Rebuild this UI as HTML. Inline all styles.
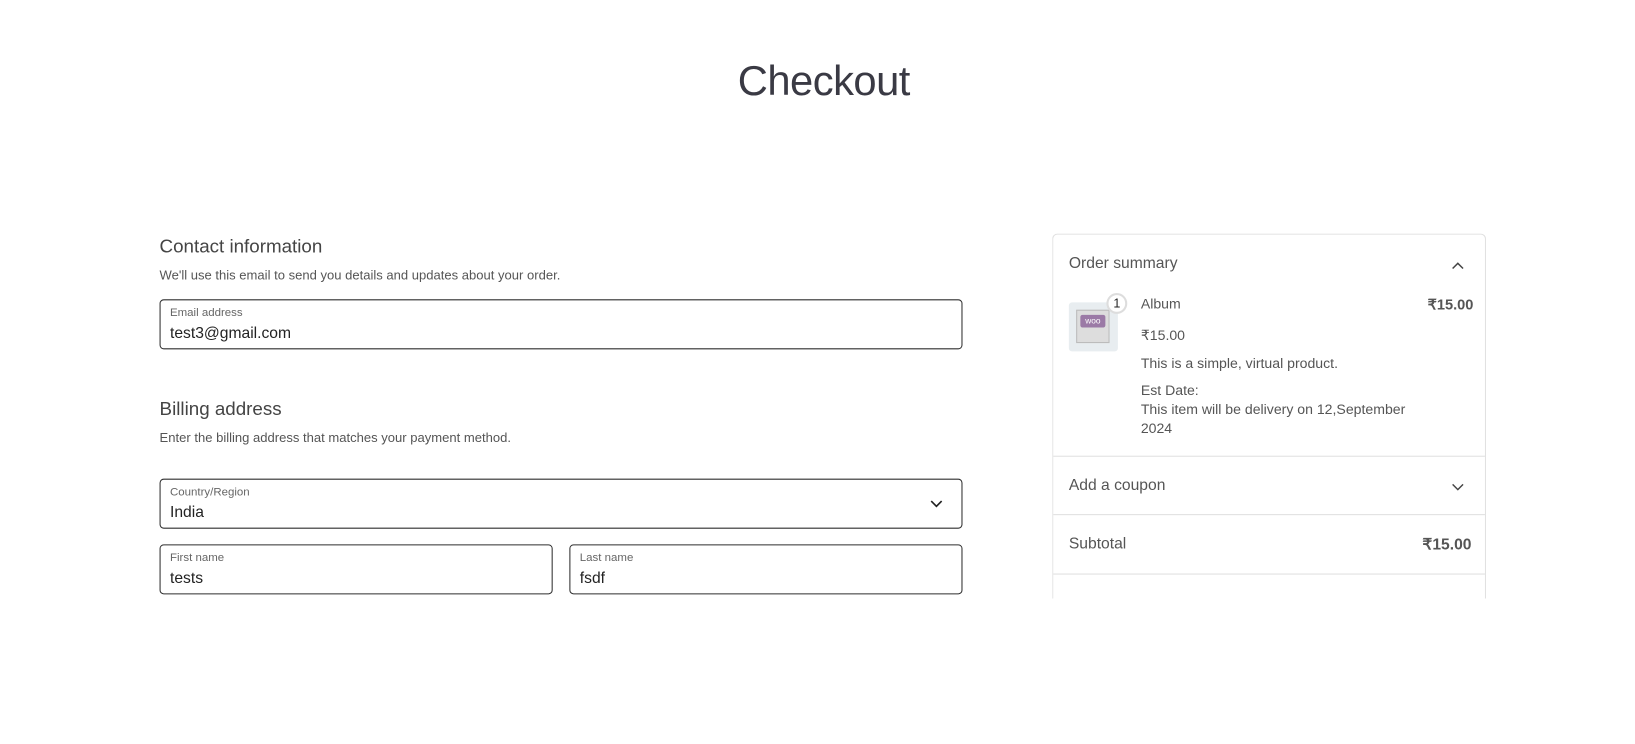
<!DOCTYPE html>
<html><head><meta charset="utf-8"><style>
*{box-sizing:border-box;margin:0;padding:0}
body{width:1635px;height:743px;background:#fff;font-family:"Liberation Sans",sans-serif;color:#2f2f2f;overflow:hidden}
#w{position:relative;width:1568px;height:713px;transform:scale(1.0428);transform-origin:0 0}
.abs{position:absolute;white-space:nowrap}
h1{position:absolute;left:0;width:1580px;text-align:center;top:56px;font-size:40px;font-weight:normal;color:#3a3a44;letter-spacing:-0.5px}
.h2{font-size:18px;color:#444}
.sub{font-size:12.5px;color:#555}
.field{position:absolute;border:1px solid #2f2f2f;border-radius:4px;background:#fff}
.field .lab{position:absolute;left:9px;top:6px;font-size:11px;color:#666}
.field .val{position:absolute;left:9px;top:23px;font-size:15px;color:#222}
.card{position:absolute;left:1009px;top:224px;width:416px;height:350px;border:1px solid #e0e0e0;border-bottom:none;border-radius:5px 5px 0 0}
.line{position:absolute;left:1010px;width:414px;height:1px;background:#e0e0e0}
.t{font-size:13.5px;color:#555}
</style></head><body><div id="w">
<h1>Checkout</h1>
<div class="abs h2" style="left:153px;top:226px">Contact information</div>
<div class="abs sub" style="left:153px;top:257px">We'll use this email to send you details and updates about your order.</div>
<div class="field" style="left:153px;top:287px;width:770px;height:48px"><span class="lab">Email address</span><span class="val">test3@gmail.com</span></div>
<div class="abs h2" style="left:153px;top:382px">Billing address</div>
<div class="abs sub" style="left:153px;top:413px">Enter the billing address that matches your payment method.</div>
<div class="field" style="left:153px;top:459px;width:770px;height:48px"><span class="lab">Country/Region</span><span class="val">India</span>
<svg style="position:absolute;right:18px;top:19px" width="12" height="8" viewBox="0 0 12 8"><path d="M1 1.5l5 5 5-5" fill="none" stroke="#222" stroke-width="1.6"/></svg></div>
<div class="field" style="left:153px;top:522px;width:377px;height:48px"><span class="lab">First name</span><span class="val">tests</span></div>
<div class="field" style="left:546px;top:522px;width:377px;height:48px"><span class="lab">Last name</span><span class="val">fsdf</span></div>

<div class="card"></div>
<div class="abs" style="left:1025px;top:244px;font-size:15px;color:#555">Order summary</div>
<svg class="abs" style="left:1392px;top:251px" width="12" height="8" viewBox="0 0 12 8"><path d="M1 6.5l5-5 5 5" fill="none" stroke="#444" stroke-width="1.4"/></svg>
<div class="abs" style="left:1025px;top:290px;width:47px;height:47px;background:#e8edf0;border-radius:3px"></div>
<div class="abs" style="left:1032px;top:297px;width:32px;height:32px;background:#ddd;border:1px solid #bbb"></div>
<div class="abs" style="left:1036px;top:302px;width:24px;height:12px;background:#9b7aa6;border-radius:2px;font-size:8px;color:#fff;text-align:center;line-height:12px">woo</div>
<div class="abs" style="left:1061px;top:281px;width:20px;height:20px;border-radius:50%;background:#fff;border:2px solid #ddd;font-size:12px;text-align:center;line-height:16px;color:#222">1</div>
<div class="abs t" style="left:1094px;top:284px">Album</div>
<div class="abs" style="left:1369px;top:284px;font-size:14px;font-weight:bold;color:#555">₹15.00</div>
<div class="abs t" style="left:1094px;top:314px">₹15.00</div>
<div class="abs t" style="left:1094px;top:341px">This is a simple, virtual product.</div>
<div class="abs t" style="left:1094px;top:367px">Est Date:</div>
<div class="abs t" style="left:1094px;top:385px">This item will be delivery on 12,September</div>
<div class="abs t" style="left:1094px;top:403px">2024</div>
<div class="line" style="top:437px"></div>
<div class="abs" style="left:1025px;top:457px;font-size:15px;color:#555">Add a coupon</div>
<svg class="abs" style="left:1392px;top:463px" width="12" height="8" viewBox="0 0 12 8"><path d="M1 1.5l5 5 5-5" fill="none" stroke="#444" stroke-width="1.4"/></svg>
<div class="line" style="top:493px"></div>
<div class="abs" style="left:1025px;top:513px;font-size:15px;color:#555">Subtotal</div>
<div class="abs" style="left:1364px;top:513px;font-size:15px;font-weight:bold;color:#555">₹15.00</div>
<div class="line" style="top:550px"></div>
</div></body></html>
